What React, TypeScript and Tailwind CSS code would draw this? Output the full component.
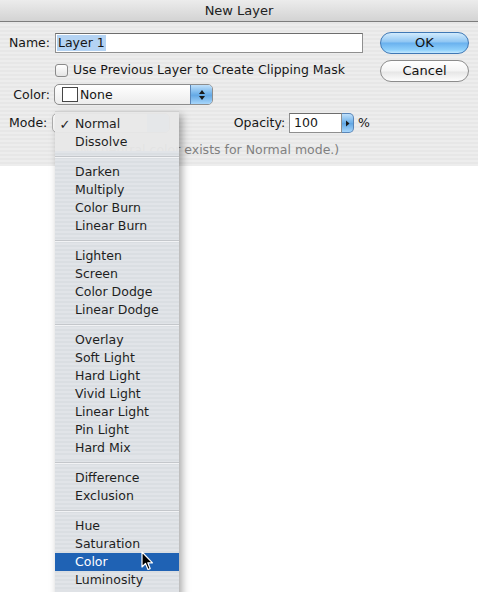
import React from "react";

const stripes =
  "bg-[repeating-linear-gradient(180deg,#ededed_0px,#ededed_2px,#e7e7e7_2px,#e7e7e7_4px)]";

function UpDown() {
  return (
    <svg width="8" height="12" viewBox="0 0 8 12">
      <path d="M4 1 L7 5 L1 5 Z" fill="#1a1a1a" />
      <path d="M4 11 L7 7 L1 7 Z" fill="#1a1a1a" />
    </svg>
  );
}

function Cursor() {
  return (
    <svg width="14" height="20" viewBox="0 0 14 20">
      <path
        d="M1 1 L1 16 L4.5 12.5 L7 18.5 L9.2 17.6 L6.8 11.8 L11.5 11.8 Z"
        fill="#000"
        stroke="#fff"
        strokeWidth="1.2"
        strokeLinejoin="round"
      />
    </svg>
  );
}

const groups: string[][] = [
  ["Normal", "Dissolve"],
  ["Darken", "Multiply", "Color Burn", "Linear Burn"],
  ["Lighten", "Screen", "Color Dodge", "Linear Dodge"],
  ["Overlay", "Soft Light", "Hard Light", "Vivid Light", "Linear Light", "Pin Light", "Hard Mix"],
  ["Difference", "Exclusion"],
  ["Hue", "Saturation", "Color", "Luminosity"],
];

function Separator() {
  return (
    <div className="h-[12px] flex flex-col justify-center">
      <div className="h-px bg-[#c4c7cb]" />
      <div className="h-px bg-[#f2f3f5]" />
    </div>
  );
}

function MenuItem({ label }: { label: string }) {
  const selected = label === "Color";
  const checked = label === "Normal";
  return (
    <div
      className={
        "h-[18px] flex items-center relative " +
        (selected ? "bg-[#1f62b4] text-white" : "text-[#1e1e1e]")
      }
    >
      <span className="w-[20px] text-center text-[13px] leading-none">{checked ? "✓" : ""}</span>
      <span className="text-[12.5px] leading-none">{label}</span>
      {selected && (
        <span className="absolute left-[86px] top-[-2px]">
          <Cursor />
        </span>
      )}
    </div>
  );
}

export default function App() {
  return (
    <div className="w-[478px] h-[592px] bg-white relative overflow-hidden font-['DejaVu_Sans',sans-serif] text-[12.5px] text-[#161616]">
      {/* dialog */}
      <div className={"h-[166px] " + stripes}>
        <div className="h-[22px] bg-[linear-gradient(180deg,#ececec,#d3d3d3)] border-b border-[#7d7d7d] flex items-center justify-center text-[13px] text-[#222]">
          New Layer
        </div>
        <div className="flex">
          <div className="flex flex-col w-[370px]">
            {/* Name */}
            <div className="flex items-center mt-[11px] h-[20px]">
              <div className="w-[50px] text-right pt-[1px]">Name:</div>
              <div className="ml-[5px] w-[308px] h-[20px] bg-white border border-[#8f8f8f] border-t-[#6d6d6d] flex items-center pl-[1px]">
                <span className="bg-[#b4d3f3] px-[1px] leading-[16px]">Layer 1</span>
              </div>
            </div>
            {/* checkbox */}
            <div className="flex items-center mt-[9px] h-[16px] pl-[55px]">
              <div className="w-[13px] h-[13px] rounded-[3px] border border-[#8a8a8a] bg-[linear-gradient(180deg,#ffffff,#e4e4e4)]" />
              <span className="ml-[5px] pt-[1px]">Use Previous Layer to Create Clipping Mask</span>
            </div>
            {/* Color */}
            <div className="flex items-center mt-[6px] h-[21px]">
              <div className="w-[50px] text-right pt-[1px]">Color:</div>
              <div className="ml-[4px] w-[159px] h-[21px] rounded-[5px] border border-[#8d8d8d] bg-[linear-gradient(180deg,#ffffff,#ececec)] flex items-center overflow-hidden">
                <div className="ml-[7px] w-[16px] h-[15px] bg-white border border-[#444]" />
                <span className="ml-[2px] flex-1 pt-[1px]">None</span>
                <div className="w-[22px] h-full bg-[linear-gradient(180deg,#bfe0fb,#6aaee8_50%,#5ea4e2_50%,#a7d6fb)] border-l border-[#5a86b8] flex items-center justify-center">
                  <UpDown />
                </div>
              </div>
            </div>
            {/* Mode / Opacity */}
            <div className="flex items-center mt-[8px] h-[20px]">
              <div className="w-[50px] text-right pt-[1px]">Mode:</div>
              <div className="ml-[5px] w-[124px] h-[20px] rounded-[5px] border border-[#b0b0b0] bg-white flex justify-end overflow-hidden">
                <div className="w-[22px] h-full bg-[#b6d4ef]" />
              </div>
              <div className="ml-[64px] flex items-center">
                <span className="pt-[1px]">Opacity:</span>
                <div className="ml-[4px] w-[53px] h-[20px] bg-white border border-[#8f8f8f] border-t-[#6d6d6d] flex items-center pl-[4px] pt-[1px]">
                  100
                </div>
                <div className="w-[12px] h-[20px] rounded-r-[5px] bg-[linear-gradient(180deg,#bfe0fb,#6aaee8_50%,#5ea4e2_50%,#a7d6fb)] border border-l-0 border-[#5a86b8] flex items-center justify-center">
                  <svg width="5" height="7" viewBox="0 0 5 7">
                    <path d="M1 0.5 L4.5 3.5 L1 6.5 Z" fill="#1a1a1a" />
                  </svg>
                </div>
                <span className="ml-[4px] pt-[1px]">%</span>
              </div>
            </div>
            <div className="mt-[9px] pl-[75px] text-[#808080] leading-[16px]">
              (No neutral color exists for Normal mode.)
            </div>
          </div>
          {/* buttons */}
          <div className="flex flex-col ml-[10px] mt-[10px] gap-[6px]">
            <div className="w-[89px] h-[22px] rounded-full border border-[#3f78b5] bg-[linear-gradient(180deg,#d2ebfd_0%,#8fc6f3_45%,#69b1ee_50%,#8fd0fb_85%,#c4e9ff_100%)] flex items-center justify-center text-[13px] text-[#111]">
              OK
            </div>
            <div className="w-[89px] h-[22px] rounded-full border border-[#8c8c8c] bg-[linear-gradient(180deg,#ffffff_0%,#f4f4f4_50%,#e6e6e6_55%,#fdfdfd_100%)] flex items-center justify-center text-[13px] text-[#111]">
              Cancel
            </div>
          </div>
        </div>
      </div>

      {/* menu */}
      <div className="absolute left-[55px] top-[111px] w-[124px] shadow-[3px_4px_8px_rgba(0,0,0,0.35)] border-t border-[#d0d0d0]">
        {groups.map((g, gi) => (
          <div
            key={gi}
            className={
              gi === 0
                ? "bg-[rgba(232,232,232,0.95)] pt-[3px]"
                : "bg-[repeating-linear-gradient(180deg,#e1e4e8_0px,#e1e4e8_2px,#dadee2_2px,#dadee2_4px)]"
            }
          >
            {gi > 0 && <Separator />}
            {g.map((l) => (
              <MenuItem key={l} label={l} />
            ))}
          </div>
        ))}
        <div className="h-[10px] bg-[#dfe2e6]" />
      </div>
    </div>
  );
}
